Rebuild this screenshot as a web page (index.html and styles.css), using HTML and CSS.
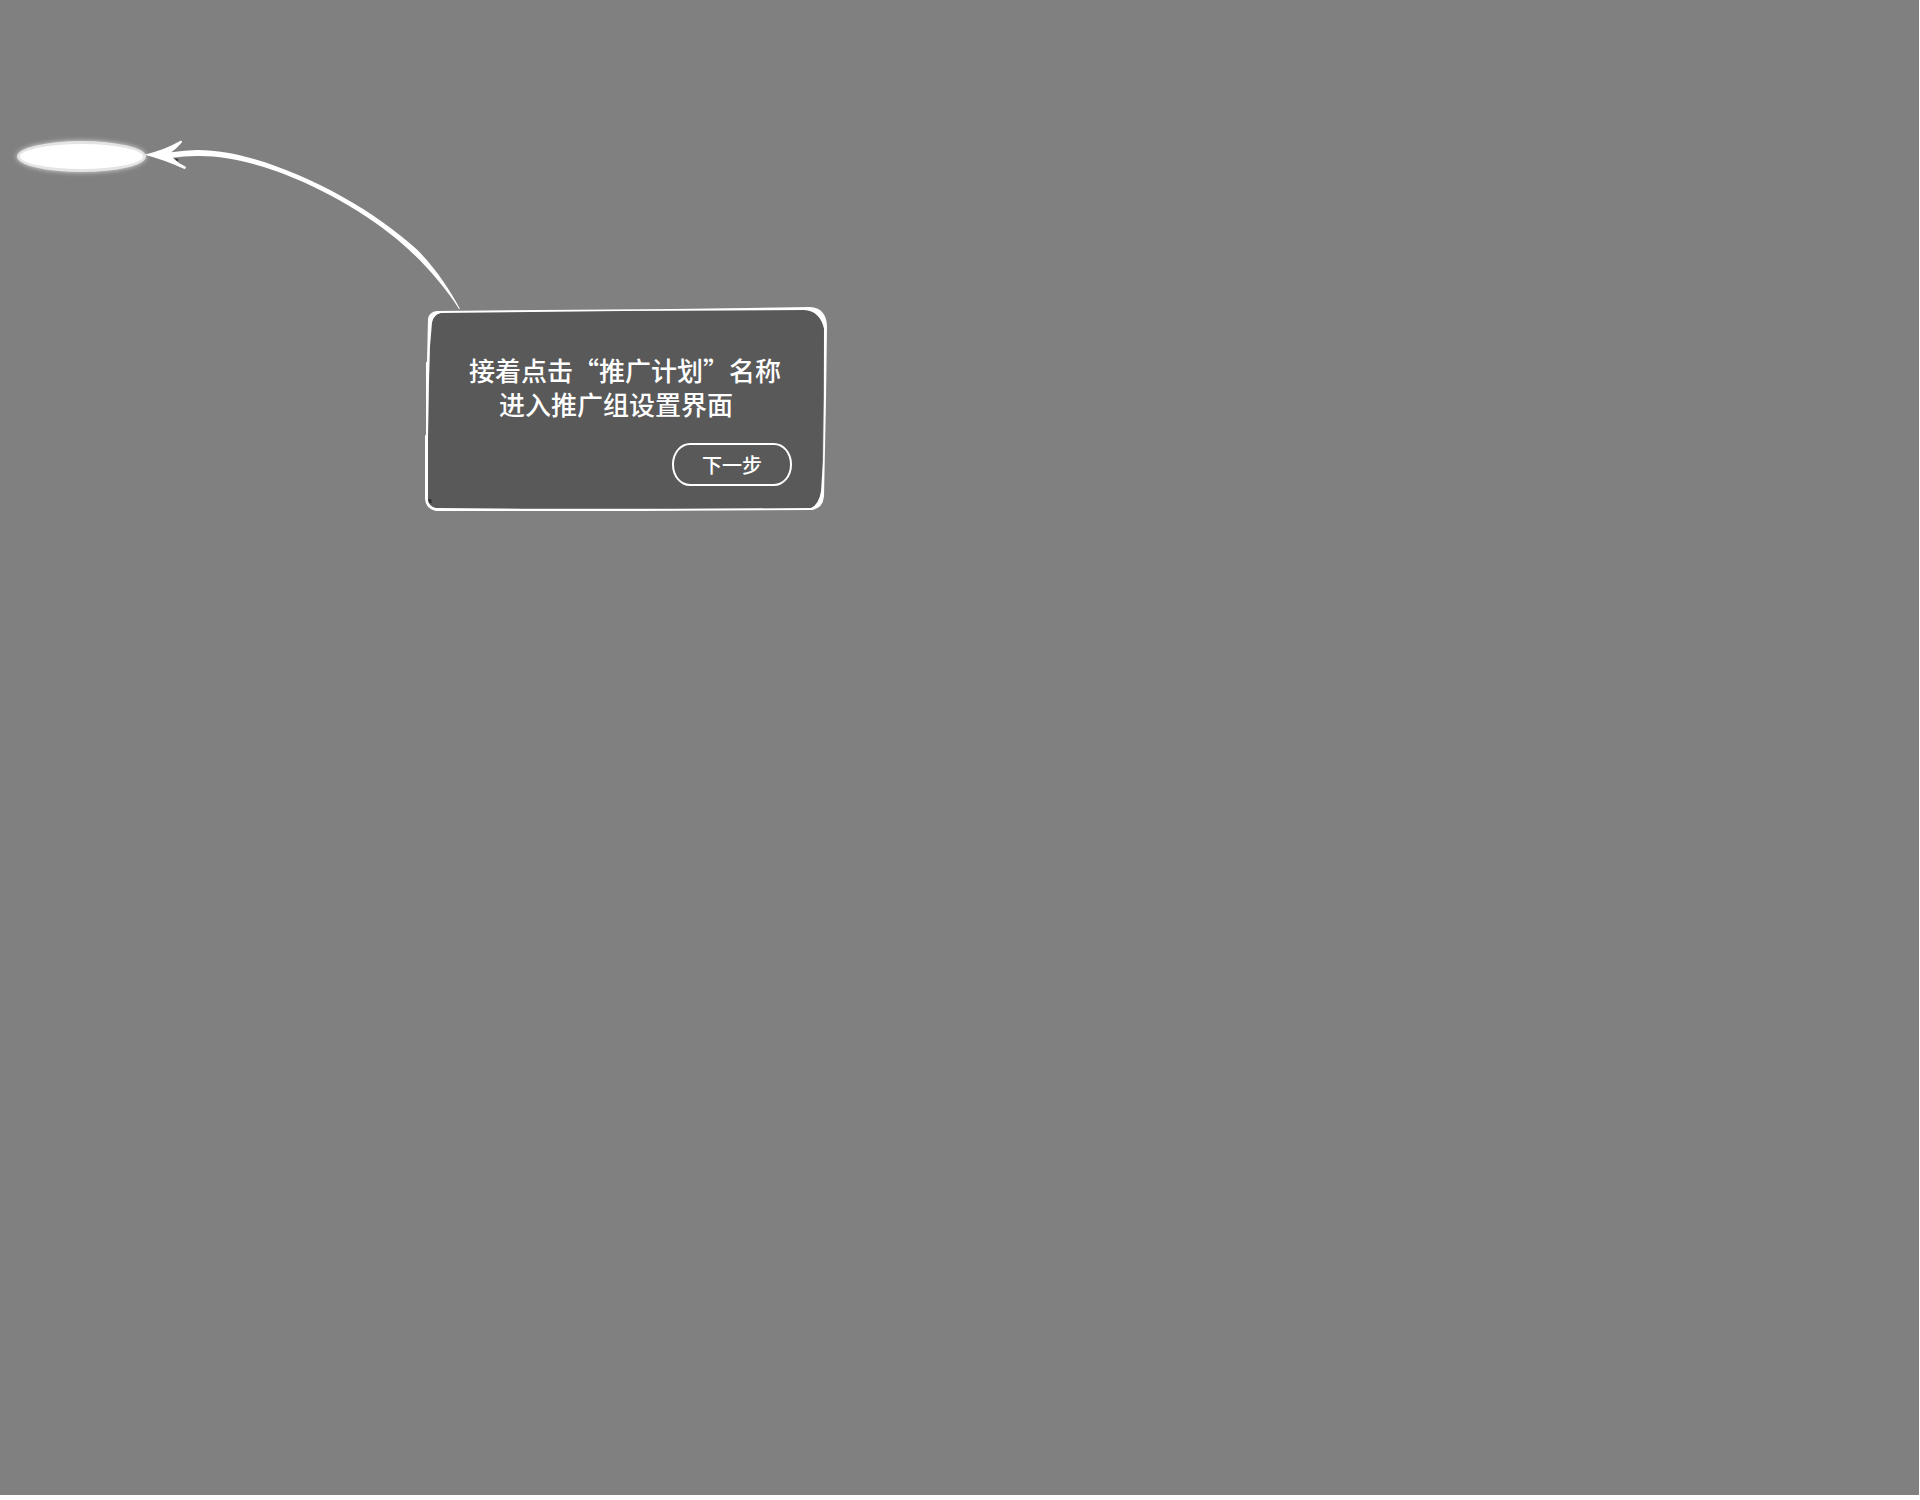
FILE: index.html
```html
<!DOCTYPE html>
<html lang="zh-CN">
<head>
<meta charset="utf-8">
<title>新手引导</title>
<link rel="stylesheet" href="styles.css">
</head>
<body>
<main class="mask">
  <div class="spotlight"></div>
  <svg class="arrow" viewBox="0 0 1050 600" aria-hidden="true">
    <path d="M44 104 Q108 88 150 63 Q157 61 156 67 Q142 84 124 97 Q165 91 200 90 C400 88 700 240 860 388 C915 442 960 510 990 567 L987 567 C940 492 870 415 800 357 C650 232 390 104 200 108 Q160 108 128 113 Q143 128 167 140 Q170 146 163 147 Q100 118 44 104Z"/>
    <path class="shade" d="M134 115 L145 117 L144 124 L138 121Z"/>
  </svg>
  <section class="dialog">
    <svg class="frame" viewBox="0 0 404 206" preserveAspectRatio="none" aria-hidden="true">
      <path class="fill" d="M14 5 L386 3 Q400 6 401 20 L399 185 Q396 200 388 203 L12 203 Q4 202 3 192 L6 15 Q7 7 14 5Z"/>
      <path class="line" fill-rule="evenodd" d="M13 4 L250 2 L387 0 Q403 1 404 19 L403 95 L401 191 Q400 203 389 205 L215 206 L12 206 Q2 204 1 194 L1 130 L2 129 L2 56 L3 55 L4 12 Q5 5 13 4Z M17 6 Q9 8 8 16 L6 40 L5 75 L4 130 L4 195 Q5 202 12 203 L100 204 L250 204 L388 203 Q396 199 398 186 L400 155 L401 90 L401 22 Q397 4 381 3 L200 4Z"/>
      <path class="shade" d="M4 194 L7 194 L8 198 L5 198Z"/>
    </svg>
    <p class="message">接着点击“推广计划”名称</p>
    <p class="message second">进入推广组设置界面</p>
    <button class="next" type="button">下一步</button>
  </section>
</main>
</body>
</html>
```
FILE: styles.css
```css
* {
  box-sizing: border-box;
}

body {
  margin: 0;
  background: #fff;
  font-family: "Noto Sans CJK SC", sans-serif;
}

.mask {
  position: relative;
  min-height: calc(100vh - 5px);
  margin-right: 1px;
  background: #808080;
}

.spotlight {
  position: absolute;
  left: 17px;
  top: 141px;
  width: 129px;
  height: 31px;
  border: 3px solid #e4e4e4;
  border-radius: 50%;
  background: #fff;
  box-shadow: 0 0 5px #ddd;
}

.arrow {
  position: absolute;
  left: 130px;
  top: 120px;
  width: 350px;
  height: 200px;
  fill: #fff;
}

.shade {
  fill: #333;
}

.dialog {
  position: absolute;
  left: 424px;
  top: 307px;
  width: 403px;
  display: flex;
  flex-direction: column;
  padding: 46px 35px 25px 45px;
  color: #fff;
}

.frame {
  position: absolute;
  inset: 0;
  width: 100%;
  height: 100%;
}

.fill {
  fill: #595959;
}

.line {
  fill: #fff;
}

.message {
  position: relative;
  margin: 0;
  font-size: 26px;
  font-weight: 500;
  line-height: 34px;
  white-space: nowrap;
}

.second {
  padding-left: 30px;
}

.next {
  position: relative;
  align-self: flex-end;
  width: 120px;
  height: 43px;
  margin-top: 22px;
  padding: 0;
  border: 2px solid #fff;
  border-radius: 18px / 21px;
  background: transparent;
  color: #fff;
  font-family: inherit;
  font-size: 20px;
  font-weight: 500;
  line-height: 38px;
  cursor: pointer;
}
```
